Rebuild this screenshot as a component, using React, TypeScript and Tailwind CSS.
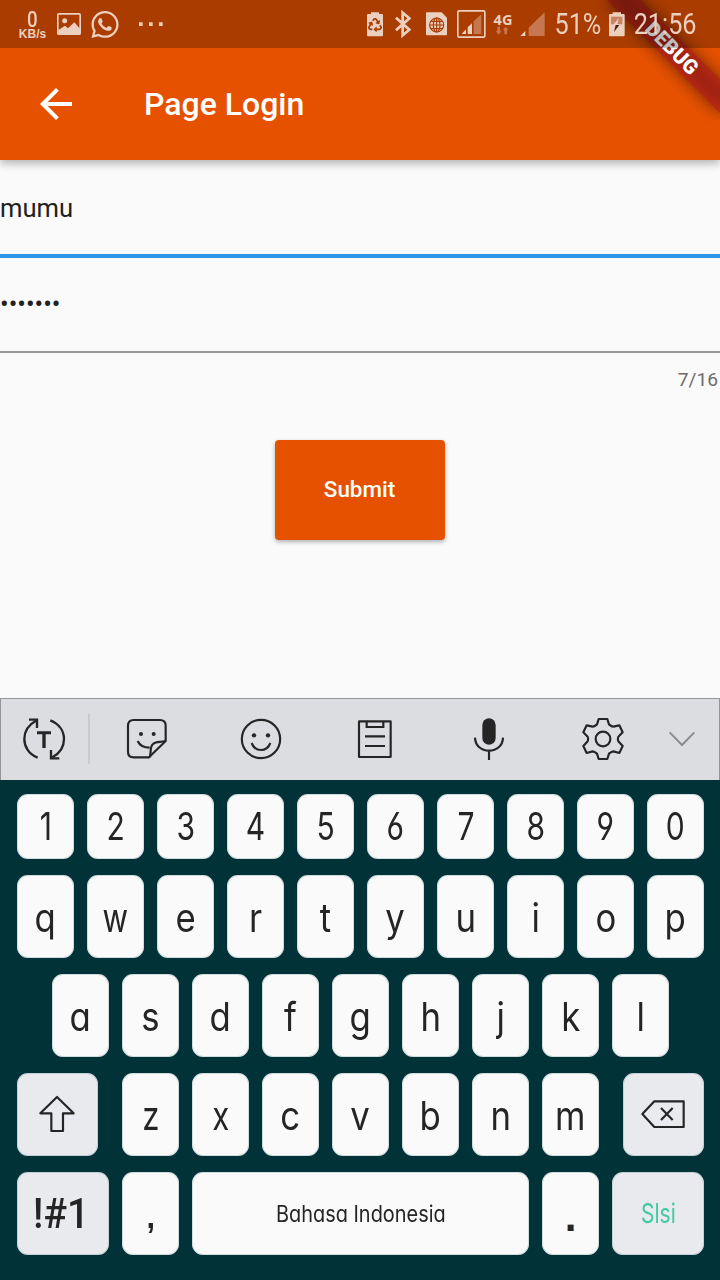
import type { ReactNode } from "react";
import { FaRecycle, FaWhatsapp } from "react-icons/fa";

const INK = "#252525";
const PALE = "#ebcfbf";
const DIM = "#c6774f";

type GlyphProps = {
  x: number;
  y?: number;
  w: number;
  h?: number;
  className?: string;
  children: ReactNode;
};

/* Icon artwork is drawn on a grid three times finer than the screen's. */
function Glyph({ x, y = 0, w, h = 144, className = "", children }: GlyphProps) {
  return (
    <svg
      width={w / 3}
      height={h / 3}
      viewBox={`${x} ${y} ${w} ${h}`}
      fill="none"
      className={`block shrink-0 ${className}`}
    >
      {children}
    </svg>
  );
}

function StatusBar() {
  return (
    <div className="relative z-20 flex h-12 items-center bg-black/26 text-[#ebcfbf]">
      <div className="ml-[18px] flex w-[29px] flex-col items-center pt-0.5">
        <span className="font-[Roboto] text-[22px] leading-[17px] font-medium scale-x-[.85]">0</span>
        <span className="mt-px font-['Liberation_Sans'] text-[12px] leading-[10px] font-bold">KB/s</span>
      </div>
      <Glyph x={171} w={72} className="ml-2.5">
        <rect x="173.500" y="41.500" width="67" height="61" rx="3" stroke={PALE} strokeWidth="5" />
        <circle cx="194" cy="62" r="7.500" fill={PALE} />
        <path d="M175 90L195 77L204 85L223 67L240 86V102H175Z" fill={PALE} />
      </Glyph>
      <FaWhatsapp className="ml-2.5 h-[31px] w-7 shrink-0" />
      <Glyph x={414} w={80} className="ml-[19px]">
        <path d="M417 67h11v11h-11zM447 67h11v11h-11zM477 67h11v11h-11z" fill={PALE} />
      </Glyph>

      <div className="ml-auto flex h-full items-center">
        <div className="relative">
          <Glyph x={51} w={48}>
            <path d="M51 45q0-3 3-3h9v-5h24v5h9q3 0 3 3v61q0 3-3 3H54q-3 0-3-3Z" fill={PALE} />
          </Glyph>
          <FaRecycle className="absolute top-[18px] left-px size-3.5 text-[#a83c02]" />
        </div>
        <Glyph x={135} w={48} className="ml-3">
          <path d="M138 53L178 89L158 106V38L178 55L138 91" stroke={PALE} strokeWidth="8" />
        </Glyph>
        <Glyph x={228} w={63} className="ml-[15px]">
          <path d="M228 40q0-3 3-3h44l16 16v50q0 3-3 3h-57q-3 0-3-3Z" fill={PALE} />
          <g stroke="#a83c02" strokeWidth="3.500">
            <circle cx="260" cy="75" r="21" />
            <ellipse cx="260" cy="75" rx="10" ry="21" />
            <path d="M239 75h42M260 54v42M243 64h34M243 86h34" />
          </g>
        </Glyph>
        <Glyph x={321} w={87} className="ml-2.5">
          <rect x="323.500" y="32.500" width="81" height="79" rx="4" stroke={PALE} strokeWidth="5" />
          <path d="M335 102L348 88V102ZM353 82L366 70V102H353Z" fill={PALE} />
          <path d="M371 64L394 43V102H371Z" fill={DIM} />
        </Glyph>
        <div className="ml-1.5 flex w-[22px] flex-col items-center">
          <span className="font-['Noto_Sans'] text-[14.500px] leading-[14px] font-bold">4G</span>
          <Glyph x={436} y={82} w={46} h={28}>
            <path
              d="M443 84h8v13h5l-9 11l-9-11h5ZM464 107h8V95h5l-9-11l-9 11h5Z"
              fill={DIM}
            />
          </Glyph>
        </div>
        <Glyph x={514} w={75} className="ml-1.5">
          <path d="M515 108L530 93V108Z" fill={PALE} />
          <path d="M540 83L588 37V108H540Z" fill={DIM} />
        </Glyph>
        <div className="ml-2 flex w-[49px] justify-center">
          <span className="font-[Roboto] text-[29px] leading-none font-normal scale-x-[.87]">51%</span>
        </div>
        <Glyph x={241} w={48} className="ml-[7px]">
          <path d="M241 45q0-3 3-3h8v-5h25v5h8q3 0 3 3v61q0 3-3 3h-41q-3 0-3-3Z" fill={PALE} />
          <path d="M247 50h34v23h-34Z" fill="#c98562" />
          <path d="M271 54L252 76H262L257 95L276 73H266Z" fill={PALE} />
          <path d="M261 75H272L256 96Z" fill="#4a1b05" />
        </Glyph>
        <div className="mr-[22px] ml-[7px] flex w-[66px] justify-center">
          <span className="font-[Roboto] text-[29px] leading-none font-normal scale-x-[.87]">21:56</span>
        </div>
      </div>
    </div>
  );
}

function DebugBanner() {
  return (
    <div className="pointer-events-none absolute inset-0 z-10 overflow-hidden">
      <div className="absolute top-14 -right-20 h-6 w-40 origin-[80px_-56px] rotate-45">
        <div className="absolute inset-0 bg-black/50 blur-[8px]" />
        <div className="absolute inset-0 flex items-center justify-center bg-[#b71c1c]/63 font-[Roboto] text-[20.400px] leading-none font-black text-white">
          DEBUG
        </div>
      </div>
    </div>
  );
}

function Header() {
  return (
    <header className="relative z-10 h-40 bg-[#e65100] shadow-[0_4px_8px_rgba(0,0,0,0.2),0_1px_12px_rgba(0,0,0,0.12)]">
      <DebugBanner />
      <StatusBar />
      <div className="flex h-28 items-center pl-8 text-white">
        <svg width="48" height="48" viewBox="0 0 24 24" fill="currentColor">
          <path d="M20 11H7.830l5.590-5.590L12 4l-8 8 8 8 1.410-1.410L7.830 13H20v-2z" />
        </svg>
        <h1 className="ml-16 font-[Roboto] text-[32px] leading-none font-medium">Page Login</h1>
      </div>
    </header>
  );
}

function LoginForm() {
  return (
    <main className="flex h-[538px] flex-col font-[Roboto] text-[#212121]">
      <div className="h-[98px] border-b-4 border-[#2b95e9] pt-[35px] text-[25.600px] leading-[26px]">mumu</div>
      <div className="h-[95px] border-b-2 border-[#979797] pt-[33px] text-[25.600px] leading-[26px]">•••••••</div>
      <div className="pt-[17px] pr-0.5 text-right text-[19.200px] leading-5 text-[#6c6c6c]">7/16</div>
      <button className="mt-[50px] h-[100px] w-[170px] self-center rounded bg-[#e65100] pr-px text-[22.400px] font-medium text-white shadow-[0_2px_4px_rgba(0,0,0,0.3)]">
        Submit
      </button>
    </main>
  );
}

function ToolCell({ cx, children }: { cx: number; children: ReactNode }) {
  return (
    <div className="flex w-[114px] justify-center">
      <Glyph x={cx - 90} y={57} w={180} h={180}>
        <g stroke={INK} strokeWidth="6.500">{children}</g>
      </Glyph>
    </div>
  );
}

function Toolbar() {
  return (
    <div className="flex h-[82px] items-center bg-[#dcdde1] shadow-[inset_0_1px_0_#949599,inset_1px_0_0_#949599,inset_-1px_0_0_#949599]">
      <div className="flex w-22 justify-center">
        <Glyph x={42} y={57} w={180} h={180}>
          <g stroke={INK} strokeWidth="7">
            <path d="M113 203C86 193 73 170 73 147C73 122 86 104 108 92" />
            <path d="M87 89H111V114" />
            <path d="M151 91C178 102 192 124 192 147C192 171 179 190 157 202" />
            <path d="M178 205H153V180" />
          </g>
          <path d="M111 124H153V133H137V174H127V133H111Z" fill={INK} />
        </Glyph>
      </div>
      <div className="h-[50px] w-0.5 bg-[#c9cacd]" />
      <ToolCell cx={441}>
        <path d="M401 90H480Q497 90 497 107V153L447 202H401Q384 202 384 185V107Q384 90 401 90Z" strokeLinejoin="round" />
        <path d="M449 202C455 186 448 172 459 162C469 152 481 158 497 153" />
        <path d="M413 153Q422 173 449 173" />
        <circle cx="423" cy="132" r="6" fill={INK} stroke="none" />
        <circle cx="461" cy="132" r="6" fill={INK} stroke="none" />
      </ToolCell>
      <ToolCell cx={783}>
        <circle cx="783" cy="147" r="57.500" />
        <path d="M755 159Q763 180 783 180Q803 180 811 159" />
        <circle cx="762" cy="136" r="6.500" fill={INK} stroke="none" />
        <circle cx="804" cy="136" r="6.500" fill={INK} stroke="none" />
      </ToolCell>
      <ToolCell cx={45}>
        <rect x="-3" y="94" width="95" height="107" rx="1" />
        <path d="M20 94V111H70V94M15 139H75M15 168H75" />
      </ToolCell>
      <ToolCell cx={387}>
        <rect x="367" y="85" width="40" height="79" rx="20" fill={INK} stroke="none" />
        <path d="M345 143C346 168 364 182 387 182C410 182 428 168 429 143M387 182V210" />
      </ToolCell>
      <ToolCell cx={729}>
        <path
          strokeLinejoin="round"
          d="M716 87H742L747 103Q755 110 760 110L778 106L788 127L775 140Q772 147 775 154L788 168L778 189L760 184Q755 184 747 191L742 207H716L711 191Q703 184 698 184L680 189L670 168L683 154Q686 147 683 140L670 127L680 106L698 110Q703 110 711 103Z"
        />
        <circle cx="729" cy="147" r="22" />
      </ToolCell>
      <div className="flex w-11 justify-center">
        <Glyph x={921} y={102} w={90} h={90}>
          <path d="M929 127L966 165L1003 127" stroke="#8b8c8f" strokeWidth="6" />
        </Glyph>
      </div>
    </div>
  );
}

const KEY_BASE = "flex shrink-0 rounded-[11px] shadow-[inset_0_0_0_1px_rgba(130,165,170,0.35)]";
const KEY_FONT = "font-[Inter] [font-feature-settings:'cv11','cv03','cv04']";

function DigitKey({ label }: { label: string }) {
  return (
    <div className={`${KEY_BASE} h-[65px] w-[57px] justify-center bg-[#fafafa] pt-[13px]`}>
      <span className={`${KEY_FONT} h-fit scale-x-[.78] text-[38.500px] leading-none`}>{label}</span>
    </div>
  );
}

function LetterKey({ label }: { label: string }) {
  const narrow = "wxz".includes(label);
  return (
    <div className={`${KEY_BASE} h-[83px] w-[57px] justify-center bg-[#fafafa] pt-6`}>
      <span
        className={`${KEY_FONT} h-fit text-[39.500px] leading-none ${narrow ? "scale-x-[.79]" : "scale-x-[.88]"}`}
      >
        {label}
      </span>
    </div>
  );
}

function Letters({ chars }: { chars: string }) {
  return (
    <div className="flex gap-[13px]">
      {chars.split("").map((c) => (
        <LetterKey key={c} label={c} />
      ))}
    </div>
  );
}

function Keyboard() {
  return (
    <div className="flex h-[500px] flex-col gap-4 bg-[#003238] pt-3.5 pr-4 pl-[17px] text-[#252525]">
      <div className="flex gap-[13px]">
        {"1234567890".split("").map((d) => (
          <DigitKey key={d} label={d} />
        ))}
      </div>
      <Letters chars="qwertyuiop" />
      <div className="pl-[35px]">
        <Letters chars="asdfghjkl" />
      </div>
      <div className="flex gap-6">
        <div className={`${KEY_BASE} h-[83px] w-[81px] bg-[#e9eaee]`}>
          <Glyph x={51} y={39} w={243} h={249}>
            <path
              d="M171 111L221 160H189V213H154V160H121Z"
              stroke={INK}
              strokeWidth="6.500"
              strokeLinejoin="round"
            />
          </Glyph>
        </div>
        <Letters chars="zxcvbnm" />
        <div className={`${KEY_BASE} h-[83px] w-[81px] bg-[#e9eaee]`}>
          <Glyph x={789} y={39} w={243} h={249}>
            <path
              d="M883 124H971V201H883L847 162ZM903 144L938 180M938 144L903 180"
              stroke={INK}
              strokeWidth="6.500"
              strokeLinejoin="round"
            />
          </Glyph>
        </div>
      </div>
      <div className="flex gap-[13px]">
        <div className={`${KEY_BASE} h-[83px] w-[92px] justify-center bg-[#e9eaee] pt-[21px] pr-1`}>
          <span className="h-fit scale-x-[.93] font-[Roboto] text-[42px] leading-none font-medium">!#1</span>
        </div>
        <div className={`${KEY_BASE} h-[83px] w-[57px] justify-center bg-[#fafafa] pt-[27px]`}>
          <span className="h-fit scale-x-[.9] font-['Liberation_Sans'] text-[34px] leading-none font-bold">,</span>
        </div>
        <div className={`${KEY_BASE} h-[83px] w-[337px] items-center justify-center bg-[#fafafa] pt-0.5`}>
          <span className={`${KEY_FONT} scale-x-[.885] text-[22.500px] leading-none whitespace-nowrap`}>
            Bahasa Indonesia
          </span>
        </div>
        <div className={`${KEY_BASE} h-[83px] w-[57px] justify-center bg-[#fafafa] pt-[24px]`}>
          <span className="h-fit font-['Liberation_Sans'] text-[42px] leading-none font-bold">.</span>
        </div>
        <div className={`${KEY_BASE} h-[83px] w-[92px] items-center justify-center bg-[#e9eaee]`}>
          <span className={`${KEY_FONT} scale-x-[.78] text-[27px] leading-none text-[#40c9a2]`}>Slsi</span>
        </div>
      </div>
    </div>
  );
}

export default function App() {
  return (
    <div className="h-[1280px] w-[720px] overflow-hidden bg-[#fafafa]">
      <Header />
      <LoginForm />
      <Toolbar />
      <Keyboard />
    </div>
  );
}
